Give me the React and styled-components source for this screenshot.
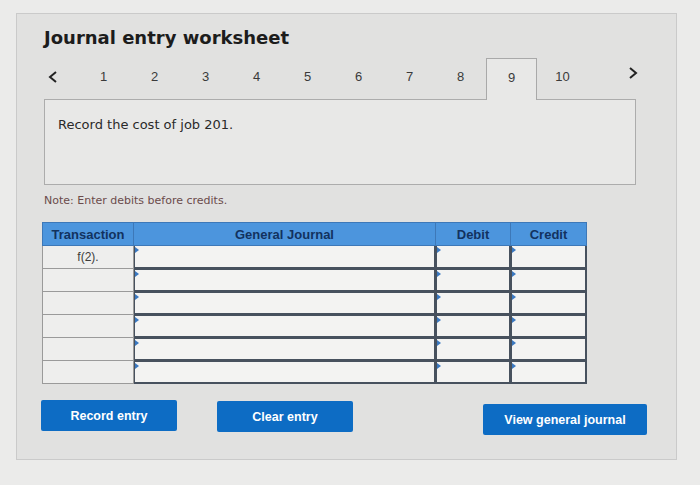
import { Fragment } from 'react'
import styled, { createGlobalStyle } from 'styled-components'

const GlobalStyle = createGlobalStyle`
    body {
        margin:0;
        background:#ebebea;
        font-family:"DejaVu Sans", Verdana, sans-serif;
    }
`
const Page = styled.div`
    width:700px;
    height:485px;
    padding:13px 0 0 16px;
    box-sizing:border-box;
`
const Panel = styled.div`
    width:661px;
    height:447px;
    box-sizing:border-box;
    background:#e1e1e0;
    border:1px solid #cacaca;
    padding:12px 26px 0 27px;
    display:flex;
    flex-direction:column;
`
const Title = styled.h1`
    font-size:18px;
    font-weight:bold;
    color:#1c1c1c;
    margin:0;
    line-height:23px;
`
const TabRow = styled.div`
    display:flex;
    align-items:stretch;
    height:41px;
    margin-top:9px;
    width:594px;
    position:relative;
    z-index:1;
`
const Arrow = styled.div`
    width:${props => props.$w}px;
    display:flex;
    align-items:center;
    justify-content:${props => props.$end ? 'flex-end' : 'flex-start'};
    padding:0 ${props => props.$end ? '0' : '4px'} ${props => props.$end ? '11px' : '3px'};
    box-sizing:border-box;
`
const Tab = styled.div`
    width:51px;
    box-sizing:border-box;
    display:flex;
    align-items:center;
    justify-content:center;
    padding-bottom:5px;
    font-family:"Liberation Sans", Arial, sans-serif;
    font-size:13px;
    color:#3a3a3a;
    border:${props => props.$active ? '1px solid #a9a9a9' : 'none'};
    border-bottom:none;
    background:${props => props.$active ? '#e8e8e7' : 'transparent'};
    margin-bottom:${props => props.$active ? '-1px' : '0'};
`
const Prompt = styled.div`
    width:592px;
    height:86px;
    box-sizing:border-box;
    background:#e8e8e7;
    border:1px solid #acacac;
    padding:17px 13px;
    font-size:13px;
    color:#2a2a2a;
`
const Note = styled.p`
    margin:9px 0 0;
    font-size:11px;
    color:#6b4b4b;
`
const Grid = styled.div`
    display:grid;
    grid-template-columns:92px 302px 75px 76px;
    grid-template-rows:24px;
    grid-auto-rows:23px;
    width:545px;
    margin:15px 0 0 -2px;
`
const Head = styled.div`
    background:#4c95dd;
    border:1px solid #3d78b8;
    border-left:${props => props.$first ? '1px solid #3d78b8' : 'none'};
    box-sizing:border-box;
    display:flex;
    align-items:center;
    justify-content:center;
    font-family:"Liberation Sans", Arial, sans-serif;
    font-weight:bold;
    font-size:13px;
    color:#12325f;
`
const TxCell = styled.div`
    background:#eeeeed;
    border:1px solid #9a9a9a;
    border-top:none;
    box-sizing:border-box;
    display:flex;
    align-items:center;
    justify-content:center;
    font-family:"Liberation Sans", Arial, sans-serif;
    font-size:12px;
    color:#3c3c3c;
`
const InputCell = styled.div`
    position:relative;
    background:#f3f3f2;
    border:2px solid #47515e;
    border-top:${props => props.$top ? 'none' : '2px solid #47515e'};
    border-left:1px solid #47515e;
    margin-top:${props => props.$top ? '0' : '-1px'};
    box-sizing:border-box;
    &::before {
        content:'';
        position:absolute;
        left:0;
        top:1px;
        border-top:3px solid transparent;
        border-bottom:3px solid transparent;
        border-left:4px solid #3a78c0;
    }
`
const Buttons = styled.div`
    display:flex;
    align-items:flex-start;
    margin:16px 0 0 -3px;
`
const Button = styled.button`
    width:${props => props.$w}px;
    height:31px;
    margin-left:${props => props.$gap}px;
    margin-top:${props => props.$drop}px;
    border:none;
    border-radius:2px;
    background:#0d6cc4;
    color:white;
    font-family:"Liberation Sans", Arial, sans-serif;
    font-weight:bold;
    font-size:12.5px;
    cursor:pointer;
`

const Chevron = ({ flip }) => (
    <svg width="10" height="14" viewBox="0 0 10 14">
        <path d={flip ? 'M2 2 L8 7 L2 12' : 'M8 2 L2 7 L8 12'} fill="none" stroke="#222" strokeWidth="2" />
    </svg>
)

const tabs = ['1', '2', '3', '4', '5', '6', '7', '8', '9', '10']
const rows = ['f(2).', '', '', '', '', '']

const App = () => {
    return (
        <Page>
            <GlobalStyle />
            <Panel>
                <Title>Journal entry worksheet</Title>
                <TabRow>
                    <Arrow $w={34}><Chevron /></Arrow>
                    {tabs.map(t => <Tab key={t} $active={t === '9'}>{t}</Tab>)}
                    <Arrow $w={50} $end><Chevron flip /></Arrow>
                </TabRow>
                <Prompt>Record the cost of job 201.</Prompt>
                <Note>Note: Enter debits before credits.</Note>
                <Grid>
                    <Head $first>Transaction</Head>
                    <Head>General Journal</Head>
                    <Head>Debit</Head>
                    <Head>Credit</Head>
                    {rows.map((r, i) => (
                        <Fragment key={i}>
                            <TxCell>{r}</TxCell>
                            <InputCell $top={i === 0} />
                            <InputCell $top={i === 0} />
                            <InputCell $top={i === 0} />
                        </Fragment>
                    ))}
                </Grid>
                <Buttons>
                    <Button $w={136} $gap={0} $drop={0}>Record entry</Button>
                    <Button $w={136} $gap={40} $drop={1}>Clear entry</Button>
                    <Button $w={164} $gap={130} $drop={4}>View general journal</Button>
                </Buttons>
            </Panel>
        </Page>
    )
}
export default App
